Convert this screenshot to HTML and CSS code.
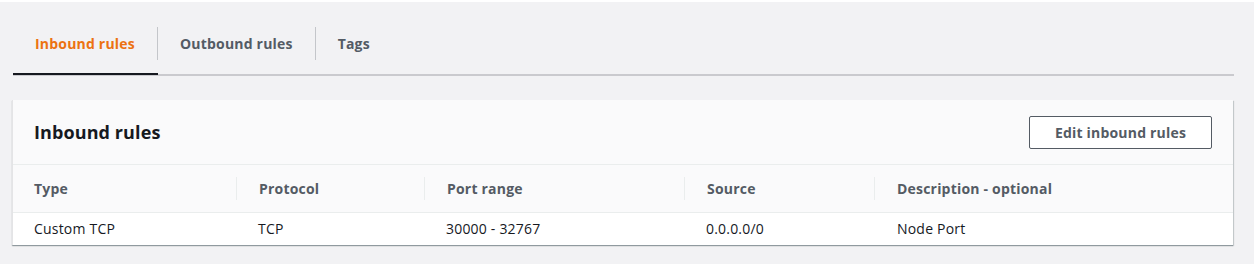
FILE: index.html
```html
<!DOCTYPE html>
<html lang="en">
	<head>
		<meta charset="UTF-8" />
		<title>Security group rules</title>
		<link rel="stylesheet" href="styles.css">
	</head>
	<body>
		<div class="page">
			<div class="tabs">
				<div class="tab active"><span class="tab-label">Inbound rules</span></div>
				<div class="tab"><span class="tab-label">Outbound rules</span></div>
				<div class="tab"><span class="tab-label last">Tags</span></div>
			</div>

			<div class="card">
				<div class="card-header">
					<h2>Inbound rules</h2>
					<button class="btn">Edit inbound rules</button>
				</div>
				<div class="rules">
					<div class="th"><span>Type</span></div>
					<div class="th"><span>Protocol</span></div>
					<div class="th"><span>Port range</span></div>
					<div class="th"><span>Source</span></div>
					<div class="th"><span>Description - optional</span></div>

					<div class="td">Custom TCP</div>
					<div class="td">TCP</div>
					<div class="td">30000 - 32767</div>
					<div class="td">0.0.0.0/0</div>
					<div class="td">Node Port</div>
				</div>
			</div>
		</div>
	</body>
</html>
```

FILE: styles.css
```css
html {
	background-color: #ffffff;
}
body {
	margin: 0;
	font-family: "Open Sans", Arial, sans-serif;
	font-size: 14px;
	letter-spacing: 0.2px;
	color: #16191f;
}
.page {
	margin-top: 2px;
	width: 1254px;
	height: 262px;
	background-color: #f2f2f4;
	overflow: hidden;
}
.tabs {
	display: flex;
	margin: 0 20px 0 13px;
	padding-top: 25px;
	border-bottom: 2px solid #cacace;
}
.tab {
	padding-bottom: 14px;
}
.tab.active {
	border-bottom: 2px solid #16191f;
	margin-bottom: -1px;
	padding-bottom: 13px;
}
.tab-label {
	display: block;
	padding: 0 22px;
	line-height: 33px;
	font-weight: 700;
	color: #545b64;
	border-right: 1px solid #c4c6ca;
}
.tab-label.last {
	border-right: none;
}
.tab.active .tab-label {
	color: #ec7211;
}
.card {
	margin: 24px 21px 0 12px;
	background-color: #ffffff;
	border-left: 1px solid #e4e4e6;
	box-shadow: 0 1px 1px rgba(0, 28, 36, 0.3), 1px 1px 1px rgba(0, 28, 36, 0.15);
}
.card-header {
	display: flex;
	align-items: center;
	justify-content: space-between;
	height: 64px;
	padding: 0 21px 0 21px;
	background-color: #fafafb;
	border-bottom: 1px solid #eaeded;
}
.card-header h2 {
	margin: 0;
	font-size: 18px;
	font-weight: 700;
	letter-spacing: 0.1px;
	color: #16191f;
}
.btn {
	width: 183px;
	height: 33px;
	padding: 0;
	font-family: inherit;
	font-size: 14px;
	font-weight: 700;
	letter-spacing: 0.2px;
	color: #545b64;
	background-color: #ffffff;
	border: 1px solid #545b64;
	border-radius: 2px;
}
.rules {
	display: grid;
	grid-template-columns: 223px 188px 260px 190px 1fr;
}
.th {
	height: 48px;
	padding: 12px 0;
	box-sizing: border-box;
	background-color: #fafafb;
	border-bottom: 1px solid #eaeded;
}
.th span {
	display: block;
	line-height: 23px;
	padding-left: 22px;
	font-weight: 700;
	color: #545b64;
	border-left: 1px solid #eaeded;
}
.th:first-child span {
	padding-left: 21px;
	border-left: none;
}
.td {
	height: 32px;
	line-height: 32px;
	padding-left: 22px;
}
.td:nth-child(6) {
	padding-left: 21px;
}
.td:last-child {
	padding-left: 23px;
}
```
